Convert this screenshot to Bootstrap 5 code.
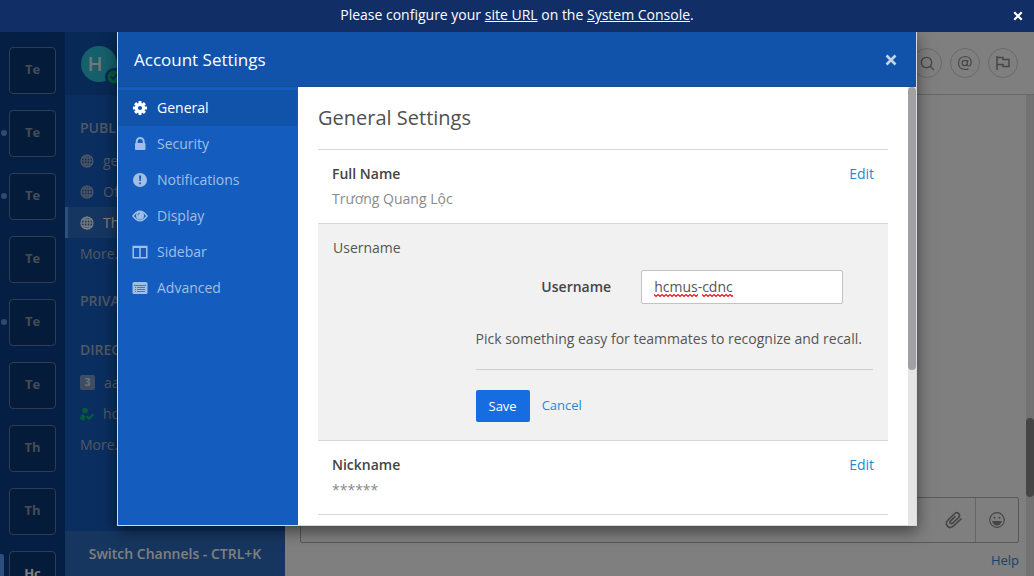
<!DOCTYPE html>
<html lang="en">
<head>
<meta charset="utf-8">
<meta name="viewport" content="width=device-width, initial-scale=1">
<title>Account Settings</title>
<link href="https://cdn.jsdelivr.net/npm/bootstrap@5.3.0/dist/css/bootstrap.min.css" rel="stylesheet">
<style>
  body { font-family: "Open Sans", sans-serif; font-size: 14px; line-height: 20px; color: #444; }
  svg { display: block; }
  .app-shell { height: 100vh; }
  .notice-bar { height: 32px; background: #112f66; color: #fff; }
  .notice-bar a { color: #fff; }
  .notice-text { padding-bottom: 2px; }
  .notice-close { right: 11px; }
  .x-button { background: none; border: 0; padding: 0; color: #fff; }

  .team-rail { width: 65px; background: #0a3f88; padding-top: 15px; gap: 16px; }
  .team-item { height: 47px; width: 47px; }
  .team-tile { width: 47px; height: 47px; border: 1px solid #5d7ba8; border-radius: 4px; background: #083672; color: #8e98a8; font-weight: 700; font-size: 13px; padding: 0 0 4px; }
  .team-dot { left: -8px; top: 20px; width: 6px; height: 6px; border-radius: 50%; background: #5a94ea; }
  .team-mark { left: -9px; top: 3px; width: 4px; height: 42px; border-radius: 0 3px 3px 0; background: #579eff; }
  .team-on { color: #fff; }

  .channel-pane { width: 220px; background: #145dbf; }
  .pane-head { height: 63px; background: #1153ab; padding-left: 16px; }
  .avatar { width: 36px; height: 36px; border-radius: 50%; background: #2cc0d8; color: #e4eef0; font-size: 20px; font-weight: 600; padding-right: 8px; }
  .presence { left: 24px; top: 22px; }
  .channel-scroll { padding-top: 15px; }
  .channel-group { margin-bottom: 14px; }
  .channel-label { height: 35px; padding-left: 15px; font-weight: 600; color: #a1b0c7; font-size: 14px; }
  .channel-row { height: 31px; padding-left: 15px; color: #a1b0c7; text-decoration: none; gap: 9px; }
  .channel-row.current { background: #2c6dc5; color: #fff; border-left: 3px solid #579eff; padding-left: 12px; }
  .unread { width: 15px; height: 15px; border-radius: 2px; background: #7a9dc8; color: #dce6f3; font-size: 10px; line-height: 15px; }
  .switcher { height: 45px; background: #2c6dc0; color: #fff; border: 0; font-weight: 600; }

  .main-head { height: 63px; border-bottom: 1px solid #d0d0d0; padding-right: 16px; gap: 8px; }
  .round-btn { width: 30px; height: 30px; border: 1px solid #d2d2d2; border-radius: 50%; background: none; color: #8c8c8c; padding: 0; }
  .post-area { min-height: 0; }
  .track { width: 8px; background: #e5e5e5; }
  .post-thumb { height: 79px; background: #8a8a8a; border-radius: 4px; margin-bottom: 79px; }
  .composer { padding: 0 7px 0 15px; }
  .composer-box { height: 46px; border: 1px solid #b0b0b0; border-radius: 2px; }
  .composer-box input { border: 0; background: none; }
  .composer-box button { width: 43px; border: 0; background: none; color: #8c8c8c; padding: 0; }
  .composer-box .emoji { border-left: 1px solid #ccc; }
  .composer-foot { height: 33px; padding-top: 7px; text-align: right; font-size: 13px; }
  .composer-foot a, .text-action { color: #2389d7; text-decoration: none; }

  .veil { background: rgba(0,0,0,.5); }
  .settings-dialog { width: 100%; max-width: 800px; background: #fff; border: 1px solid #d9d9d9; border-top: 0; box-shadow: 0 5px 15px rgba(0,0,0,.5); }
  .settings-head { height: 55px; background: #1153ab; border-bottom: 1px solid #1a4b94; color: #fff; padding: 2px 19px 0 16px; }
  .settings-head h1 { font-size: 17px; line-height: 24px; font-weight: 400; }
  .settings-main { height: calc(100vh - 138px); }
  .settings-tabs { width: 180px; background: #145dbf; padding-top: 3px; }
  .settings-tab { height: 36px; border: 0; background: none; color: #a1beE5; padding: 0 0 0 14px; gap: 9px; }
  .settings-tab.current { background: #1153ab; color: #fff; border-right: 1px solid #145dbf; }
  .settings-body { padding: 0 20px; }
  .settings-body h2 { font-size: 20px; line-height: 28px; font-weight: 400; color: #505050; margin: 0; padding: 17px 0; height: 62px; }
  .setting { border-top: 1px solid #d8d8d8; padding: 14px; height: 74px; }
  .setting h3, .edit-box label { font-size: 14px; line-height: 20px; font-weight: 600; margin: 0; }
  .setting p { margin: 5px 0 0; color: #8a8a8a; }
  .edit-box { border-top: 1px solid #d8d8d8; background: #f1f1f1; padding: 14px 15px 18px; }
  .edit-title { height: 32px; color: #555; }
  .wide-gutter { --bs-gutter-x: 30px; }
  .field-line { margin-right: 15px; }
  .edit-box .form-control { height: 34px; border: 1px solid #c2c2c2; border-radius: 2px; padding: 5px 12px 7px; font-size: 14px; line-height: 20px; color: #555; }
  .spell { left: 28px; top: 24px; }
  .edit-hint { margin: 25px 0 20px; color: #555; white-space: nowrap; }
  .edit-foot { border-top: 1px solid #cdcdcd; padding-top: 20px; gap: 12px; }
  .save-btn { height: 32px; padding: 0 13px; border: 0; border-radius: 2px; background: #166de0; color: #fff; font-size: 13px; }
  .text-action { border: 0; background: none; padding: 0; }
  .cancel-btn { font-size: 13px; padding-bottom: 2px; }
  .body-thumb { height: 64.5%; background: #a1a1a3; border-radius: 4px; }
</style>
</head>
<body>
<svg width="0" height="0" class="position-absolute" aria-hidden="true">
  <symbol id="globe" viewBox="0 0 14 14"><g fill="none" stroke="currentColor" stroke-width="1.2"><circle cx="7" cy="7" r="6"/><ellipse cx="7" cy="7" rx="3" ry="6"/><path d="M7 1v12M1 7h12M2 3.8h10M2 10.2h10"/></g></symbol>
  <symbol id="cross" viewBox="0 0 12 12"><path d="M1.5 1.5l9 9M10.5 1.5l-9 9" stroke="currentColor" stroke-width="2.6" fill="none"/></symbol>
</svg>
<div class="app-shell d-flex flex-column overflow-hidden">
  <div class="notice-bar position-relative d-flex align-items-center justify-content-center flex-shrink-0">
    <span class="notice-text">Please configure your <a href="#">site URL</a> on the <a href="#">System Console</a>.</span>
    <button class="x-button notice-close position-absolute" aria-label="Dismiss"><svg width="10" height="10"><use href="#cross"/></svg></button>
  </div>

  <div class="position-relative d-flex flex-grow-1 overflow-hidden">
    <nav class="team-rail d-flex flex-column align-items-center flex-shrink-0" aria-label="Teams">
      <div class="team-item position-relative"><button class="team-tile">Te</button></div>
      <div class="team-item position-relative"><i class="team-dot position-absolute"></i><button class="team-tile">Te</button></div>
      <div class="team-item position-relative"><i class="team-dot position-absolute"></i><button class="team-tile">Te</button></div>
      <div class="team-item position-relative"><button class="team-tile">Te</button></div>
      <div class="team-item position-relative"><i class="team-dot position-absolute"></i><button class="team-tile">Te</button></div>
      <div class="team-item position-relative"><button class="team-tile">Te</button></div>
      <div class="team-item position-relative"><button class="team-tile">Th</button></div>
      <div class="team-item position-relative"><button class="team-tile">Th</button></div>
      <div class="team-item position-relative"><i class="team-mark position-absolute"></i><button class="team-tile team-on">Hc</button></div>
    </nav>

    <aside class="channel-pane d-flex flex-column flex-shrink-0">
      <div class="pane-head d-flex align-items-center">
        <div class="avatar position-relative d-flex align-items-center justify-content-center">H
          <svg class="presence position-absolute" width="18" height="18" viewBox="0 0 18 18"><circle cx="9" cy="9" r="9" fill="#1153ab"/><circle cx="9" cy="9" r="6.500" fill="#0bb877"/><path d="M5.500 8.500l2.500 2.500L12.500 6" fill="none" stroke="#1153ab" stroke-width="1.800"/></svg>
        </div>
      </div>
      <div class="channel-scroll flex-grow-1 overflow-hidden">
        <div class="channel-group">
          <div class="channel-label d-flex align-items-center">PUBLIC</div>
          <a href="#" class="channel-row d-flex align-items-center"><svg width="14" height="14"><use href="#globe"/></svg>general</a>
          <a href="#" class="channel-row d-flex align-items-center"><svg width="14" height="14"><use href="#globe"/></svg>Off</a>
          <a href="#" class="channel-row current d-flex align-items-center"><svg width="14" height="14"><use href="#globe"/></svg>Th</a>
          <a href="#" class="channel-row d-flex align-items-center">More...</a>
        </div>
        <div class="channel-group"><div class="channel-label d-flex align-items-center">PRIVATE</div></div>
        <div class="channel-group">
          <div class="channel-label d-flex align-items-center">DIRECT</div>
          <a href="#" class="channel-row d-flex align-items-center"><span class="unread text-center fw-bold">3</span>aa</a>
          <a href="#" class="channel-row d-flex align-items-center"><svg width="14" height="14" viewBox="0 0 14 14"><circle cx="5" cy="3.500" r="2.800" fill="#0bb877"/><path d="M.5 9.500Q1 7 3.200 7.200L5 9l-.5 4.500Q2 13.500 .8 12.500 0 12 .5 9.500z" fill="#0bb877"/><path d="M6.500 9l2.500 2.700L13.300 7.400" fill="none" stroke="#0bb877" stroke-width="2.200"/></svg>hc</a>
          <a href="#" class="channel-row d-flex align-items-center">More...</a>
        </div>
      </div>
      <button class="switcher flex-shrink-0">Switch Channels - CTRL+K</button>
    </aside>

    <main class="d-flex flex-column flex-grow-1 bg-white">
      <div class="main-head d-flex align-items-center justify-content-end flex-shrink-0">
        <button class="round-btn d-flex align-items-center justify-content-center" aria-label="Search"><svg width="15" height="15" viewBox="0 0 15 15" fill="none" stroke="currentColor" stroke-width="1.300"><circle cx="6.500" cy="6.500" r="5.200"/><path d="M10.200 10.200l3.800 3.800"/></svg></button>
        <button class="round-btn d-flex align-items-center justify-content-center" aria-label="Mentions"><svg width="16" height="16" viewBox="0 0 16 16" fill="none" stroke="currentColor" stroke-width="1.200"><circle cx="7.800" cy="8" r="2.700"/><path d="M10.800 5l-.5 4.500q0 1.500 1.500 1.500Q14 11 14.200 7.500 14 1.500 8 1.500 1.600 2 1.500 8.200 1.800 14.300 8 14.500q2 0 3.500-.8"/></svg></button>
        <button class="round-btn d-flex align-items-center justify-content-center" aria-label="Flagged posts"><svg width="16" height="16" viewBox="0 0 16 16" fill="none" stroke="currentColor" stroke-width="1.500"><path d="M2 1v14M2 2.500h6v2h6v7H8v-2H2"/></svg></button>
      </div>
      <div class="post-area d-flex flex-grow-1">
        <div class="d-flex flex-column flex-grow-1">
          <div class="flex-grow-1"></div>
          <div class="composer">
            <div class="composer-box d-flex">
              <input class="flex-grow-1" type="text" aria-label="Message">
              <button class="d-flex align-items-center justify-content-center" aria-label="Attach"><svg width="18" height="18" viewBox="0 0 18 18" fill="none" stroke="currentColor" stroke-width="1.700"><path d="M16.500 7.500l-7.600 7.200c-2.400 2.200-5 2-6.400.5S.9 11 3 9l6.200-6c1.500-1.400 3.400-1.500 4.500-.4s1 2.800-.4 4.200l-5.500 5.200c-.8.8-1.900.9-2.500.2s-.5-1.600.3-2.400l4.800-4.600"/></svg></button>
              <button class="emoji d-flex align-items-center justify-content-center" aria-label="Emoji"><svg width="16" height="16" viewBox="0 0 16 16"><circle cx="8" cy="8" r="7.300" fill="none" stroke="currentColor" stroke-width="1.200"/><circle cx="5.500" cy="5.800" r="1" fill="currentColor"/><circle cx="10.500" cy="5.800" r="1" fill="currentColor"/><path d="M3 9h10q-1.500 4.500-5 4.500T3 9z" fill="currentColor"/></svg></button>
            </div>
            <div class="composer-foot"><a href="#">Help</a></div>
          </div>
        </div>
        <div class="track d-flex flex-column justify-content-end"><div class="post-thumb"></div></div>
      </div>
    </main>

    <div class="veil position-absolute top-0 start-0 w-100 h-100 d-flex justify-content-center align-items-start">
      <div class="settings-dialog" role="dialog" aria-labelledby="dialog-title">
        <div class="settings-head d-flex align-items-center justify-content-between">
          <h1 id="dialog-title" class="m-0">Account Settings</h1>
          <button class="x-button opacity-75" aria-label="Close"><svg width="12" height="12"><use href="#cross"/></svg></button>
        </div>
        <div class="settings-main d-flex">
          <nav class="settings-tabs flex-shrink-0 d-flex flex-column" aria-label="Settings sections">
            <button class="settings-tab current d-flex align-items-center"><svg width="16" height="16" viewBox="0 0 16 16"><circle cx="8" cy="8" r="3.700" fill="none" stroke="currentColor" stroke-width="3.200"/><path d="M8 1v2.500M8 12.500v2.500M1 8h2.500M12.500 8h2.500M3.100 3.100l1.700 1.700M11.200 11.200l1.700 1.700M12.900 3.100l-1.700 1.700M4.800 11.200l-1.700 1.700" stroke="currentColor" stroke-width="3"/></svg>General</button>
            <button class="settings-tab d-flex align-items-center"><svg width="16" height="16" viewBox="0 0 16 16"><path d="M4.700 8V5.500a3.500 3.500 0 0 1 7 0V8" fill="none" stroke="currentColor" stroke-width="2"/><rect x="3" y="7" width="10.500" height="7" rx="1" fill="currentColor"/></svg>Security</button>
            <button class="settings-tab d-flex align-items-center"><svg width="16" height="16" viewBox="0 0 16 16"><circle cx="8" cy="8" r="7" fill="currentColor"/><path d="M7 3.500h2.200L8.800 9H7.400zM7.200 10.500h1.800v1.800H7.200z" fill="#145dbf"/></svg>Notifications</button>
            <button class="settings-tab d-flex align-items-center"><svg width="16" height="16" viewBox="0 0 16 16"><path d="M1 8q7-9.400 14 0-7 9.400-14 0z" fill="none" stroke="currentColor" stroke-width="1.500"/><circle cx="8" cy="7.500" r="4" fill="currentColor"/><path d="M5.800 7.300q.2-2 2.200-2.200" fill="none" stroke="#145dbf" stroke-width=".8"/></svg>Display</button>
            <button class="settings-tab d-flex align-items-center"><svg width="16" height="16" viewBox="0 0 16 16"><path d="M1.200 2.500h13.600v11.200H1.200zM8 3v11" fill="none" stroke="currentColor" stroke-width="1.500"/><path d="M1 3h14" stroke="currentColor" stroke-width="2"/></svg>Sidebar</button>
            <button class="settings-tab d-flex align-items-center"><svg width="16" height="16" viewBox="0 0 16 16"><rect x=".5" y="2" width="15" height="12" rx="1.500" fill="currentColor"/><path d="M2 5.500h12M3 7.500h1M5 7.500h8M3 9.500h1M5 9.500h8M3 11.500h1M5 11.500h8" stroke="#145dbf" stroke-width=".7"/></svg>Advanced</button>
          </nav>
          <div class="settings-body flex-grow-1 overflow-hidden">
            <h2>General Settings</h2>
            <section class="setting d-flex justify-content-between align-items-start">
              <div><h3>Full Name</h3><p>Trương Quang Lộc</p></div>
              <button class="text-action">Edit</button>
            </section>
            <form class="edit-box">
              <div class="edit-title">Username</div>
              <div class="row wide-gutter">
                <div class="col-9 offset-3">
                  <div class="row wide-gutter field-line align-items-center">
                    <label for="username" class="col-5 text-end">Username</label>
                    <div class="col-7 position-relative">
                      <input id="username" class="form-control" type="text" value="hcmus-cdnc" spellcheck="false">
                      <svg class="spell position-absolute" width="80" height="3" viewBox="0 0 80 3" aria-hidden="true"><defs><pattern id="wave" width="4" height="3" patternUnits="userSpaceOnUse"><path d="M-1 .5L0 .5 2 2.500 4 .5h1" fill="none" stroke="#f00" stroke-width="1.100"/></pattern></defs><path d="M0 0h44v3H0zM48 0h31v3H48z" fill="url(#wave)"/></svg>
                    </div>
                  </div>
                  <p class="edit-hint">Pick something easy for teammates to recognize and recall.</p>
                  <div class="edit-foot d-flex align-items-center">
                    <button type="submit" class="save-btn">Save</button>
                    <button type="button" class="text-action cancel-btn">Cancel</button>
                  </div>
                </div>
              </div>
            </form>
            <section class="setting d-flex justify-content-between align-items-start">
              <div><h3>Nickname</h3><p>******</p></div>
              <button class="text-action">Edit</button>
            </section>
            <section class="setting"></section>
          </div>
          <div class="track flex-shrink-0"><div class="body-thumb"></div></div>
        </div>
      </div>
    </div>
  </div>
</div>
<script src="https://cdn.jsdelivr.net/npm/bootstrap@5.3.0/dist/js/bootstrap.bundle.min.js"></script>
</body>
</html>
